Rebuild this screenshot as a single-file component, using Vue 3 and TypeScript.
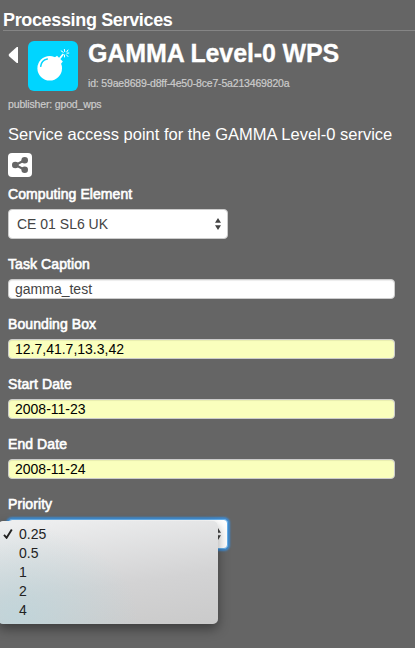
<script setup lang="ts">
import { ref } from 'vue'

interface Field {
  label: string
  value: string
  filled: boolean
}

const fields = ref<Field[]>([
  { label: 'Task Caption', value: 'gamma_test', filled: false },
  { label: 'Bounding Box', value: '12.7,41.7,13.3,42', filled: true },
  { label: 'Start Date', value: '2008-11-23', filled: true },
  { label: 'End Date', value: '2008-11-24', filled: true },
])

const priorities = ['0.25', '0.5', '1', '2', '4']
const selected = ref('0.25')
</script>

<template>
  <main class="panel">
    <h2 class="heading"><span>Processing Services</span></h2>

    <header class="service">
      <button class="back" aria-label="Back">
        <svg width="10" height="18" viewBox="0 0 10 18"><path d="M10 1v16H8.800L.8 9.900V8.300L8.800 1z" fill="#fff" /></svg>
      </button>
      <div class="logo">
        <svg width="50" height="50" viewBox="0 0 50 50">
          <circle cx="21.700" cy="27.300" r="12.300" fill="#fff" />
          <path d="M26 17l3-2.200 5.800 5.600-2.300 3.200z" fill="#fff" />
          <path d="M31 18.400l4.300-5.400" stroke="#fff" stroke-width="1.700" fill="none" />
          <path d="M12.700 25.300c.4-3.800 3-6.400 6.600-7.200" stroke="#00d5ff" stroke-width="1.500" fill="none" stroke-linecap="round" />
          <path d="M36.300 8l.5 3M40.200 8.700l-1.700 2.500M32.800 9.600l2.700 1.900M38.600 12.200l2.600-.2M38.200 13.500l2 2.300M36.500 13.600v2.800" stroke="#fff" stroke-width="1" fill="none" />
        </svg>
      </div>
      <div class="titles">
        <h1 class="name"><span>GAMMA Level-0 WPS</span></h1>
        <div class="ident"><span>id: 59ae8689-d8ff-4e50-8ce7-5a213469820a</span></div>
      </div>
    </header>

    <div class="publisher"><span>publisher: gpod_wps</span></div>
    <p class="description"><span>Service access point for the GAMMA Level-0 service</span></p>

    <button class="share" aria-label="Share">
      <svg width="24" height="24" viewBox="0 0 24 24" fill="#656565">
        <path d="M16.500 7.300L7.500 12l9 4.700" stroke="#656565" stroke-width="2.200" fill="none" />
        <circle cx="7.300" cy="12" r="3.300" /><circle cx="16.700" cy="7.300" r="3.300" /><circle cx="16.700" cy="16.700" r="3.300" />
      </svg>
    </button>

    <form class="form">
      <div class="group">
        <div class="label"><span>Computing Element</span></div>
        <div class="select">
          <span>CE 01 SL6 UK</span>
          <svg width="6" height="12" viewBox="0 0 6 12"><path d="M0 4.800L3 0l3 4.800zM0 7.200h6L3 12z" fill="#444" /></svg>
        </div>
      </div>
      <div v-for="f in fields" :key="f.label" class="group">
        <div class="label"><span>{{ f.label }}</span></div>
        <div class="input" :class="{ filled: f.filled }"><span>{{ f.value }}</span></div>
      </div>
      <div class="group">
        <div class="label"><span>Priority</span></div>
        <div class="select focused">
          <svg width="6" height="12" viewBox="0 0 6 12"><path d="M0 4.800L3 0l3 4.800zM0 7.200h6L3 12z" fill="#444" /></svg>
        </div>
        <ul class="menu">
          <li v-for="p in priorities" :key="p" class="option" @click="selected = p">
            <span class="tick"><svg v-if="p === selected" width="12" height="10" viewBox="0 0 12 10"><path d="M2 5.800l2.600 3L9.800.6" stroke="#222" stroke-width="1.900" fill="none" /></svg></span>
            <span>{{ p }}</span>
          </li>
        </ul>
      </div>
    </form>
  </main>
</template>

<style>
body {
  margin: 0;
  background: #656565;
}
</style>

<style scoped>
.panel {
  box-sizing: border-box;
  height: 648px;
  overflow: hidden;
  background: #656565;
  color: #fff;
  font: 14px/20px "Liberation Sans", Arial, sans-serif;
}
button {
  border: 0;
  padding: 0;
  background: none;
}
.heading {
  box-sizing: border-box;
  height: 31px;
  margin: 0 0 0 3px;
  padding-top: 10px;
  border-bottom: 1px solid #858585;
  font-size: 18px;
  line-height: 20px;
  letter-spacing: -0.35px;
}
.service {
  display: flex;
  padding: 10px 0 0 8px;
}
.back {
  width: 20px;
  height: 28px;
  display: flex;
  align-items: center;
}
.logo {
  width: 50px;
  height: 50px;
  border-radius: 6px;
  background: #00d5ff;
}
.logo svg,
.share svg {
  display: block;
}
.titles {
  height: 50px;
  margin-left: 10px;
}
.name {
  margin: 0;
  font-size: 25px;
  line-height: 24px;
  letter-spacing: -0.13px;
  -webkit-text-stroke: 0.3px #fff;
}
.ident {
  padding-top: 8px;
  font-size: 10.5px;
  line-height: 20px;
  letter-spacing: -0.17px;
  color: #ccc;
  -webkit-text-stroke: 0.2px #ccc;
}
.publisher {
  height: 12px;
  margin: 7px 0 0 8px;
  font-size: 10.5px;
  line-height: 12px;
  letter-spacing: -0.15px;
  color: #ccc;
  -webkit-text-stroke: 0.2px #ccc;
}
.description {
  margin: 14px 0 0 8px;
  font-size: 16.5px;
  line-height: 20px;
  white-space: nowrap;
}
.share {
  display: block;
  width: 24px;
  height: 24px;
  margin: 9px 0 0 8px;
  border-radius: 4px;
  background: #fff;
}
.form {
  padding: 7px 20px 0 8px;
}
.group {
  position: relative;
  margin-bottom: 15px;
}
.label {
  height: 25px;
  line-height: 20px;
  letter-spacing: 0.08px;
  -webkit-text-stroke: 0.6px #fff;
}
.select {
  box-sizing: border-box;
  width: 220px;
  height: 30px;
  display: flex;
  align-items: center;
  justify-content: space-between;
  padding: 0 6px 0 8px;
  border: 1px solid #ccc;
  border-radius: 4px;
  background: #fff;
  color: #444;
}
.input {
  box-sizing: border-box;
  height: 20px;
  padding: 0 6px;
  border: 1px solid #ccc;
  border-radius: 4px;
  background: #fff;
  box-shadow: inset 0 1px 1px rgba(0, 0, 0, 0.075);
  color: #444;
  line-height: 19px;
}
.filled {
  background: #faffbd;
  color: #000;
}
.focused {
  justify-content: flex-end;
  border-color: #66afe9;
  box-shadow: 0 0 2px 2px #3f8bd0;
}
.menu {
  position: absolute;
  top: 27px;
  left: -10px;
  box-sizing: border-box;
  width: 220px;
  height: 103px;
  margin: 0;
  padding: 4px 0 0 4px;
  list-style: none;
  border-radius: 5px;
  background:
    radial-gradient(ellipse 120px 90px at 20px 95px, rgba(185, 215, 222, 0.65), rgba(185, 215, 222, 0)),
    linear-gradient(172deg, #edeeef 5%, #d3d3d4 60%, #cacaca 100%);
  box-shadow: 0 5px 12px rgba(0, 0, 0, 0.4);
  color: #222;
}
.option {
  display: flex;
  height: 19px;
  line-height: 19px;
}
.tick {
  width: 17px;
}
</style>
